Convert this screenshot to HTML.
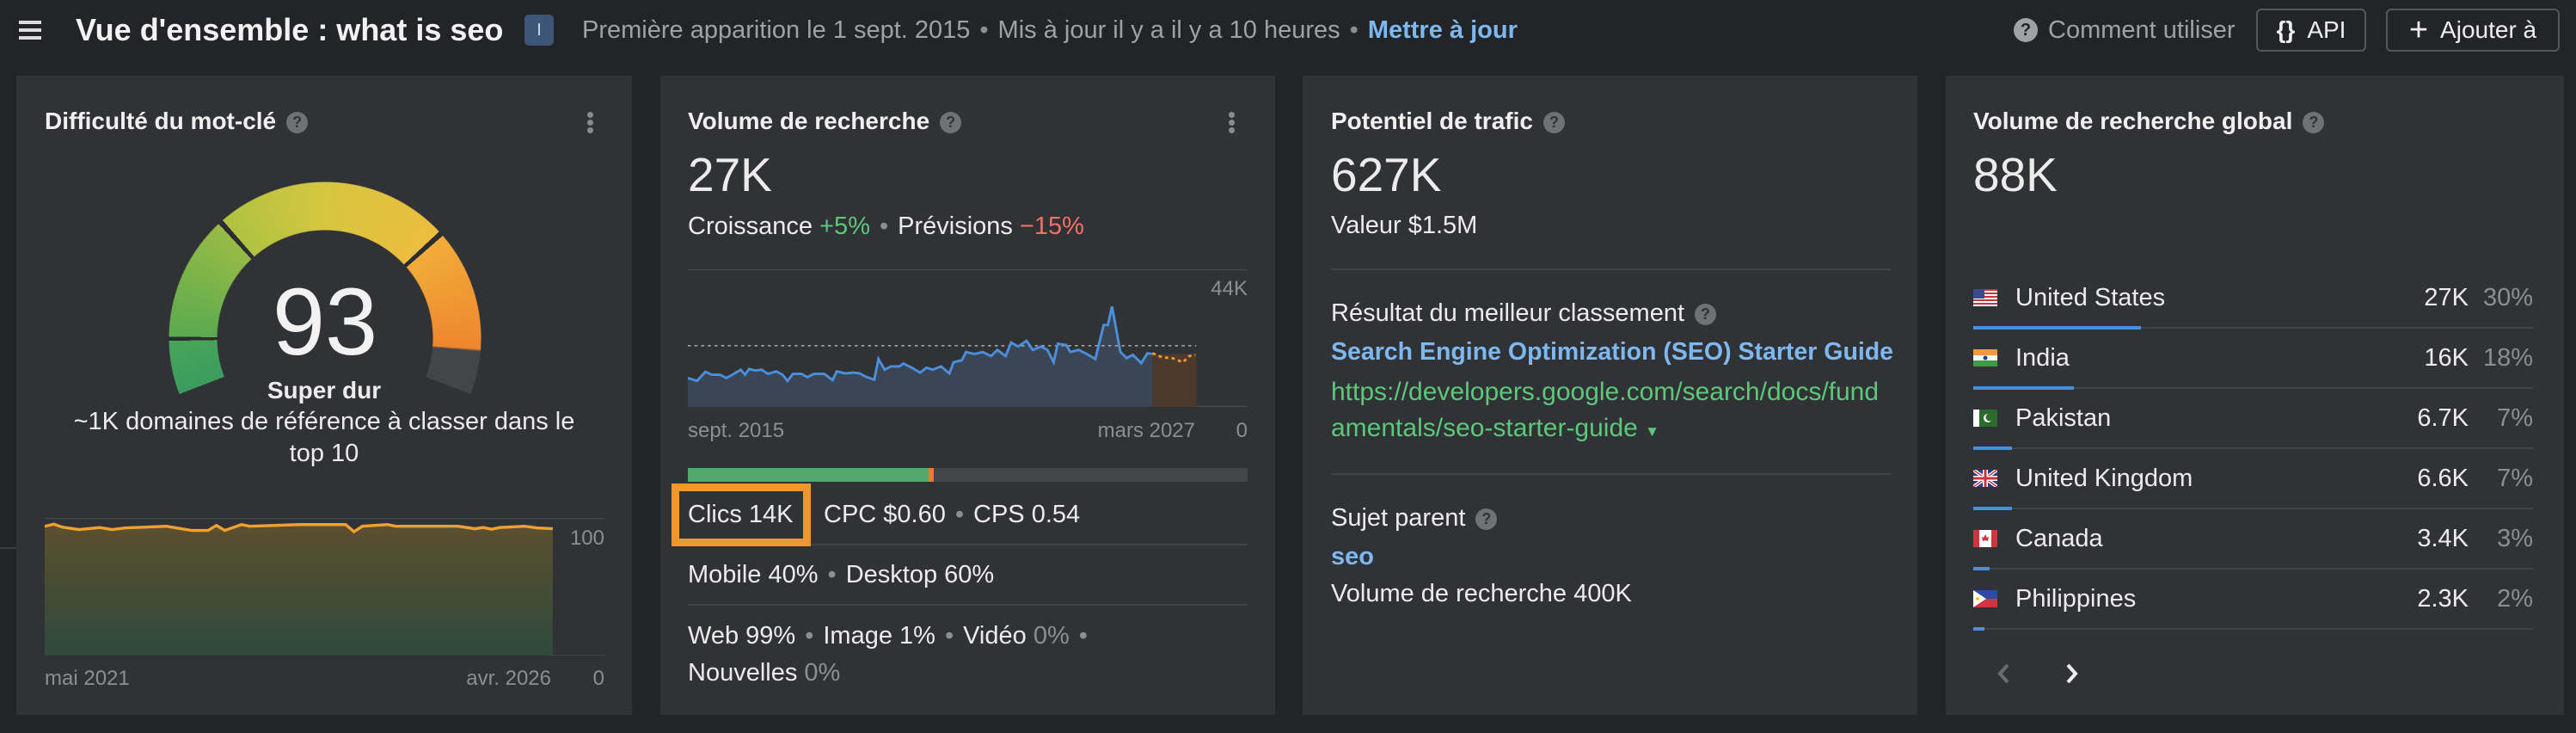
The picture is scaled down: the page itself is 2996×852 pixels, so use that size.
<!DOCTYPE html>
<html><head><meta charset="utf-8"><style>
*{margin:0;padding:0;box-sizing:border-box}
body{width:2996px;height:852px;background:#232427;font-family:"Liberation Sans",sans-serif;color:#ececec;position:relative;overflow:hidden}
.a{position:absolute;white-space:nowrap;line-height:40px}
.card{position:absolute;top:88px;height:743px;background:#313235}
.t{font-weight:bold;font-size:28px;color:#f0f0f0}
.q{display:inline-block;width:25px;height:25px;border-radius:50%;background:#707174;color:#313235;font-size:18px;font-weight:bold;line-height:25px;text-align:center;vertical-align:2px;margin-left:12px}
.big{font-size:55px;line-height:60px}
.b{font-size:29px}
.mu{color:#8d8e91}
.dot{color:#8d8e91;margin:0 11px}
.hr{position:absolute;height:2px;background:#424347}
.keb{position:absolute;width:7px;height:7px;border-radius:50%;background:#8a8b8e}
</style></head><body>
<!-- header -->
<div class="a" style="left:22px;top:20px;width:26px;height:26px">
<div style="height:4px;background:#ddd;margin-top:4px"></div><div style="height:4px;background:#ddd;margin-top:5px"></div><div style="height:4px;background:#ddd;margin-top:5px"></div></div>
<div class="a" style="left:88px;top:15px;font-size:36px;font-weight:bold;color:#f2f2f2">Vue d'ensemble : what is seo</div>
<div class="a" style="left:610px;top:17px;width:34px;height:36px;background:#3d5677;border-radius:5px;color:#cfd8e6;font-size:20px;text-align:center;line-height:36px">I</div>
<div class="a" style="left:677px;top:15px;font-size:29px;color:#a0a1a4">Première apparition le 1 sept. 2015<span class="dot">•</span>Mis à jour il y a il y a 10 heures<span class="dot">•</span><b style="color:#7db8f0">Mettre à jour</b></div>
<div class="a" style="left:2342px;top:21px;width:28px;height:28px;border-radius:50%;background:#a0a1a4;color:#232427;font-weight:bold;font-size:20px;text-align:center;line-height:28px">?</div>
<div class="a" style="left:2382px;top:15px;font-size:29px;color:#a0a1a4">Comment utiliser</div>
<div class="a" style="left:2624px;top:10px;width:128px;height:50px;border:2px solid #55565a;border-radius:6px;font-size:28px;line-height:46px;text-align:center;color:#eee"><b>{}</b>&nbsp; API</div>
<div class="a" style="left:2775px;top:10px;width:202px;height:50px;border:2px solid #55565a;border-radius:6px;font-size:28px;line-height:46px;text-align:center;color:#eee"><span style="font-size:38px;vertical-align:-3px">+</span>&nbsp; Ajouter à</div>
<div style="position:absolute;left:0;top:636px;width:19px;height:2px;background:#3a3b3e"></div>

<!-- card 1 -->
<div class="card" style="left:19px;width:716px"></div>
<div class="a t" style="left:52px;top:121px">Difficulté du mot-clé<span class="q">?</span></div>
<div class="keb" style="left:683px;top:130px"></div><div class="keb" style="left:683px;top:139px"></div><div class="keb" style="left:683px;top:148px"></div>
<div style="position:absolute;left:196px;top:211px;width:364px;height:364px;border-radius:50%;
background:conic-gradient(from 249deg,#3b9c5e 0deg,#47a45a 20deg,#2c2d30 20deg,#2c2d30 21.5deg,#5aaa4f 21.5deg,#98bb45 68deg,#2c2d30 68deg,#2c2d30 70deg,#aec341 70deg,#d6c63f 110deg,#ecbd3f 158deg,#2c2d30 158deg,#2c2d30 160deg,#f1ad38 160deg,#ee862f 205deg,#444548 206deg,#444548 222deg,transparent 222deg);
-webkit-mask:radial-gradient(circle,transparent 125px,#000 126px,#000 181px,transparent 182px);mask:radial-gradient(circle,transparent 125px,#000 126px,#000 181px,transparent 182px)"></div>
<div class="a" style="left:278px;top:320px;width:200px;text-align:center;font-size:110px;line-height:110px;color:#f2f2f2">93</div>
<div class="a" style="left:19px;top:434px;width:716px;text-align:center;font-size:28px;font-weight:bold">Super dur</div>
<div class="a" style="left:19px;top:470px;width:716px;text-align:center;font-size:29px">~1K domaines de référence à classer dans le</div>
<div class="a" style="left:19px;top:507px;width:716px;text-align:center;font-size:29px">top 10</div>
<svg style="position:absolute;left:52px;top:602px" width="651" height="160" viewBox="108 1050 1343 330" preserveAspectRatio="none">
<defs><linearGradient id="g1" x1="0" y1="0" x2="0" y2="1"><stop offset="0" stop-color="#5c4f2e"/><stop offset="1" stop-color="#2e4a3c"/></linearGradient></defs>
<line x1="108" y1="1051" x2="1451" y2="1051" stroke="#48494c" stroke-width="3"/>
<line x1="108" y1="1380" x2="1451" y2="1380" stroke="#48494c" stroke-width="3"/>
<path d="M108 1070 L130 1065 L150 1072 L190 1078 L240 1073 L270 1078 L300 1074 L350 1072 L400 1070 L460 1080 L500 1080 L520 1068 L540 1080 L580 1066 L600 1070 L720 1066 L830 1066 L850 1083 L870 1070 L930 1066 L950 1070 L1100 1070 L1140 1076 L1160 1073 L1180 1077 L1200 1073 L1260 1070 L1290 1074 L1327 1076 L1327 1380 L108 1380 Z" fill="url(#g1)"/>
<path d="M108 1070 L130 1065 L150 1072 L190 1078 L240 1073 L270 1078 L300 1074 L350 1072 L400 1070 L460 1080 L500 1080 L520 1068 L540 1080 L580 1066 L600 1070 L720 1066 L830 1066 L850 1083 L870 1070 L930 1066 L950 1070 L1100 1070 L1140 1076 L1160 1073 L1180 1077 L1200 1073 L1260 1070 L1290 1074 L1327 1076" fill="none" stroke="#f0a030" stroke-width="7"/>
</svg>
<div class="a mu" style="left:643px;top:606px;width:60px;text-align:right;font-size:24px">100</div>
<div class="a mu" style="left:52px;top:769px;font-size:24px">mai 2021</div>
<div class="a mu" style="left:500px;top:769px;width:141px;text-align:right;font-size:24px">avr. 2026</div>
<div class="a mu" style="left:663px;top:769px;width:40px;text-align:right;font-size:24px">0</div>

<!-- card 2 -->
<div class="card" style="left:768px;width:715px"></div>
<div class="a t" style="left:800px;top:121px">Volume de recherche<span class="q">?</span></div>
<div class="keb" style="left:1429px;top:130px"></div><div class="keb" style="left:1429px;top:139px"></div><div class="keb" style="left:1429px;top:148px"></div>
<div class="a big" style="left:800px;top:173px">27K</div>
<div class="a b" style="left:800px;top:243px">Croissance <span style="color:#5cc87a">+5%</span><span class="dot">•</span>Prévisions <span style="color:#f0706a">−15%</span></div>
<svg style="position:absolute;left:800px;top:313px" width="651" height="160" viewBox="83 445 1342 333" preserveAspectRatio="none">
<line x1="83" y1="446" x2="1425" y2="446" stroke="#48494c" stroke-width="3"/>
<line x1="83" y1="777" x2="1425" y2="777" stroke="#48494c" stroke-width="3"/>
<rect x="1197" y="650" width="105" height="128" fill="#4c3b2c"/>
<path d="M83 708 L105 715 L125 693 L140 700 L160 700 L175 708 L190 700 L210 688 L220 700 L230 686 L245 690 L260 688 L275 698 L295 692 L310 700 L322 715 L335 698 L355 698 L370 706 L385 698 L410 698 L430 713 L440 692 L460 697 L480 695 L495 697 L510 705 L530 712 L540 662 L555 688 L570 680 L590 680 L600 673 L620 683 L640 695 L655 683 L670 688 L690 680 L710 697 L720 670 L740 665 L750 645 L770 650 L790 645 L810 655 L825 640 L845 655 L858 622 L875 632 L895 618 L910 640 L930 632 L945 640 L960 670 L970 625 L990 628 L1000 645 L1020 640 L1040 650 L1060 662 L1080 580 L1090 580 L1100 535 L1110 590 L1120 645 L1135 660 L1150 652 L1170 672 L1185 648 L1197 650 L1197 778 L83 778 Z" fill="#3a4556"/>
<line x1="83" y1="630" x2="1302" y2="630" stroke="#c8c8c8" stroke-width="2.5" stroke-dasharray="7 9"/>
<path d="M83 708 L105 715 L125 693 L140 700 L160 700 L175 708 L190 700 L210 688 L220 700 L230 686 L245 690 L260 688 L275 698 L295 692 L310 700 L322 715 L335 698 L355 698 L370 706 L385 698 L410 698 L430 713 L440 692 L460 697 L480 695 L495 697 L510 705 L530 712 L540 662 L555 688 L570 680 L590 680 L600 673 L620 683 L640 695 L655 683 L670 688 L690 680 L710 697 L720 670 L740 665 L750 645 L770 650 L790 645 L810 655 L825 640 L845 655 L858 622 L875 632 L895 618 L910 640 L930 632 L945 640 L960 670 L970 625 L990 628 L1000 645 L1020 640 L1040 650 L1060 662 L1080 580 L1090 580 L1100 535 L1110 590 L1120 645 L1135 660 L1150 652 L1170 672 L1185 648 L1197 650" fill="none" stroke="#4a8fdc" stroke-width="6"/>
<path d="M1197 648 L1220 658 L1245 660 L1270 670 L1285 655 L1300 652" fill="none" stroke="#f0962e" stroke-width="6" stroke-dasharray="8 8"/>
</svg>
<div class="a mu" style="left:1380px;top:316px;width:71px;text-align:right;font-size:24px">44K</div>
<div class="a mu" style="left:800px;top:481px;font-size:24px">sept. 2015</div>
<div class="a mu" style="left:1200px;top:481px;width:190px;text-align:right;font-size:24px">mars 2027</div>
<div class="a mu" style="left:1411px;top:481px;width:40px;text-align:right;font-size:24px">0</div>
<div style="position:absolute;left:800px;top:544px;width:651px;height:16px;background:#454649"></div>
<div style="position:absolute;left:800px;top:544px;width:280px;height:16px;background:#52a86c"></div>
<div style="position:absolute;left:1080px;top:544px;width:6px;height:16px;background:#ee7a30"></div>
<div style="position:absolute;left:781px;top:562px;width:162px;height:73px;border:9px solid #f0962e"></div>
<div class="a b" style="left:800px;top:578px">Clics 14K</div>
<div class="a b" style="left:958px;top:578px">CPC $0.60<span class="dot">•</span>CPS 0.54</div>
<div class="hr" style="left:943px;top:632px;width:508px"></div>
<div class="a b" style="left:800px;top:648px">Mobile 40%<span class="dot">•</span>Desktop 60%</div>
<div class="hr" style="left:800px;top:702px;width:651px"></div>
<div class="a b" style="left:800px;top:719px">Web 99%<span class="dot">•</span>Image 1%<span class="dot">•</span>Vidéo <span class="mu">0%</span><span class="dot">•</span></div>
<div class="a b" style="left:800px;top:762px">Nouvelles <span class="mu">0%</span></div>

<!-- card 3 -->
<div class="card" style="left:1515px;width:715px"></div>
<div class="a t" style="left:1548px;top:121px">Potentiel de trafic<span class="q">?</span></div>
<div class="a big" style="left:1548px;top:173px">627K</div>
<div class="a b" style="left:1548px;top:242px">Valeur $1.5M</div>
<div class="hr" style="left:1548px;top:312px;width:651px"></div>
<div class="a b" style="left:1548px;top:344px">Résultat du meilleur classement<span class="q">?</span></div>
<div class="a b" style="left:1548px;top:389px;color:#7db8f0;font-weight:bold;font-size:28.5px">Search Engine Optimization (SEO) Starter Guide</div>
<div class="a b" style="left:1548px;top:436px;color:#5cc87a;font-size:30px">https://developers.google.com/search/docs/fund</div>
<div class="a b" style="left:1548px;top:478px;color:#5cc87a;font-size:30px">amentals/seo-starter-guide <span style="font-size:17px">▼</span></div>
<div class="hr" style="left:1548px;top:550px;width:651px"></div>
<div class="a b" style="left:1548px;top:582px">Sujet parent<span class="q">?</span></div>
<div class="a b" style="left:1548px;top:627px;color:#7db8f0;font-weight:bold">seo</div>
<div class="a b" style="left:1548px;top:670px">Volume de recherche 400K</div>

<!-- card 4 -->
<div class="card" style="left:2263px;width:719px"></div>
<div class="a t" style="left:2295px;top:121px">Volume de recherche global<span class="q">?</span></div>
<div class="a big" style="left:2295px;top:173px">88K</div>

<svg style="position:absolute;left:2295px;top:336px" width="28" height="20"><rect width="28" height="20" fill="#fff"/><g fill="#c8343c"><rect y="0" width="28" height="2"/><rect y="4" width="28" height="2"/><rect y="8" width="28" height="2"/><rect y="12" width="28" height="2"/><rect y="16" width="28" height="2"/></g><rect width="13" height="11" fill="#3a4a8a"/></svg>
<div class="a b" style="left:2344px;top:326px">United States</div>
<div class="a b" style="left:2760px;top:326px;width:111px;text-align:right">27K</div>
<div class="a b mu" style="left:2880px;top:326px;width:66px;text-align:right">30%</div>
<div class="hr" style="left:2295px;top:380px;width:651px"></div><div style="position:absolute;left:2295px;top:379px;width:195px;height:4px;background:#4a8fdc"></div>

<svg style="position:absolute;left:2295px;top:406px" width="28" height="20"><rect width="28" height="7" fill="#f29a3a"/><rect y="7" width="28" height="6" fill="#fff"/><rect y="13" width="28" height="7" fill="#3f9a45"/><circle cx="14" cy="10" r="2.5" fill="#2a3a8a"/></svg>
<div class="a b" style="left:2344px;top:396px">India</div>
<div class="a b" style="left:2760px;top:396px;width:111px;text-align:right">16K</div>
<div class="a b mu" style="left:2880px;top:396px;width:66px;text-align:right">18%</div>
<div class="hr" style="left:2295px;top:450px;width:651px"></div><div style="position:absolute;left:2295px;top:449px;width:117px;height:4px;background:#4a8fdc"></div>

<svg style="position:absolute;left:2295px;top:476px" width="28" height="20"><rect width="28" height="20" fill="#2d6b2d"/><rect width="7" height="20" fill="#fff"/><circle cx="17" cy="10" r="5" fill="#fff"/><circle cx="19" cy="9" r="4.5" fill="#2d6b2d"/></svg>
<div class="a b" style="left:2344px;top:466px">Pakistan</div>
<div class="a b" style="left:2760px;top:466px;width:111px;text-align:right">6.7K</div>
<div class="a b mu" style="left:2880px;top:466px;width:66px;text-align:right">7%</div>
<div class="hr" style="left:2295px;top:520px;width:651px"></div><div style="position:absolute;left:2295px;top:519px;width:45px;height:4px;background:#4a8fdc"></div>

<svg style="position:absolute;left:2295px;top:546px" width="28" height="20"><rect width="28" height="20" fill="#243e8a"/><path d="M0 0L28 20M28 0L0 20" stroke="#fff" stroke-width="4"/><path d="M0 0L28 20M28 0L0 20" stroke="#c8343c" stroke-width="1.5"/><path d="M14 0V20M0 10H28" stroke="#fff" stroke-width="6"/><path d="M14 0V20M0 10H28" stroke="#c8343c" stroke-width="3"/></svg>
<div class="a b" style="left:2344px;top:536px">United Kingdom</div>
<div class="a b" style="left:2760px;top:536px;width:111px;text-align:right">6.6K</div>
<div class="a b mu" style="left:2880px;top:536px;width:66px;text-align:right">7%</div>
<div class="hr" style="left:2295px;top:590px;width:651px"></div><div style="position:absolute;left:2295px;top:589px;width:45px;height:4px;background:#4a8fdc"></div>

<svg style="position:absolute;left:2295px;top:616px" width="28" height="20"><rect width="28" height="20" fill="#fff"/><rect width="7" height="20" fill="#d0343c"/><rect x="21" width="7" height="20" fill="#d0343c"/><path d="M14 5L16 9L18 8L17 13L14 12L11 13L10 8L12 9Z" fill="#d0343c"/></svg>
<div class="a b" style="left:2344px;top:606px">Canada</div>
<div class="a b" style="left:2760px;top:606px;width:111px;text-align:right">3.4K</div>
<div class="a b mu" style="left:2880px;top:606px;width:66px;text-align:right">3%</div>
<div class="hr" style="left:2295px;top:660px;width:651px"></div><div style="position:absolute;left:2295px;top:659px;width:19px;height:4px;background:#4a8fdc"></div>

<svg style="position:absolute;left:2295px;top:686px" width="28" height="20"><rect width="28" height="10" fill="#2a4aa8"/><rect y="10" width="28" height="10" fill="#d0343c"/><path d="M0 0L15 10L0 20Z" fill="#fff"/><circle cx="5" cy="10" r="2" fill="#f2c330"/></svg>
<div class="a b" style="left:2344px;top:676px">Philippines</div>
<div class="a b" style="left:2760px;top:676px;width:111px;text-align:right">2.3K</div>
<div class="a b mu" style="left:2880px;top:676px;width:66px;text-align:right">2%</div>
<div class="hr" style="left:2295px;top:730px;width:651px"></div><div style="position:absolute;left:2295px;top:729px;width:13px;height:4px;background:#4a8fdc"></div>

<svg style="position:absolute;left:2320px;top:770px" width="100" height="26"><path d="M15 3L6 13L15 23" fill="none" stroke="#6a6b6e" stroke-width="4"/><path d="M85 3L94 13L85 23" fill="none" stroke="#eee" stroke-width="4"/></svg>
</body></html>
